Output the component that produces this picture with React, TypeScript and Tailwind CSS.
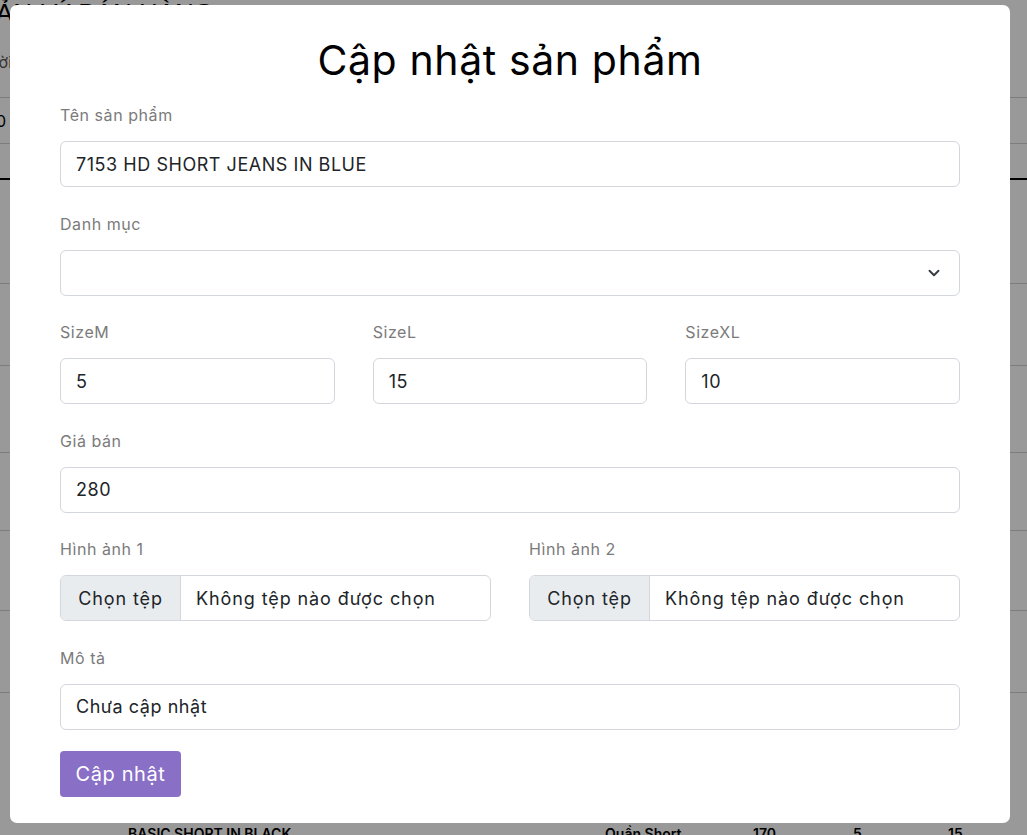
import React from 'react';
import { ChevronDown } from 'lucide-react';

const font = { fontFamily: 'Inter, "Noto Sans", sans-serif' };

const Label: React.FC<{ text: string }> = ({ text }) => (
  <div className="h-6 leading-6 text-[16px] tracking-[0.035em] text-[#7b7b7b] mb-[14px]">{text}</div>
);

const TextBox: React.FC<{ value: string }> = ({ value }) => (
  <div className="h-[46px] border border-[#d3d6db] rounded-[6px] px-[15px] flex items-center text-[18px] tracking-[0.03em] text-[#212529]">
    {value}
  </div>
);

const FileBox: React.FC = () => (
  <div className="h-[46px] border border-[#d3d6db] rounded-[6px] flex items-stretch text-[18px] tracking-[0.05em] text-[#212529] overflow-hidden">
    <div className="w-[120px] bg-[#e9ecef] border-r border-[#d3d6db] flex items-center justify-center">Chọn tệp</div>
    <div className="flex items-center pl-[15px]">Không tệp nào được chọn</div>
  </div>
);

const BackgroundPage: React.FC = () => (
  <div className="bg-white w-[1027px] h-[835px] overflow-hidden text-black" style={font}>
    <div
      className="h-[30px] -mt-[2px] w-[214px] flex justify-end text-[26px] leading-[30px] whitespace-nowrap"
      style={{ fontFamily: '"Liberation Sans", Arial, sans-serif' }}
    >
      QUẢN LÝ BÁN HÀNG
    </div>
    <div className="h-[69px] pt-[22px] w-[12px] flex justify-end text-[16px] text-[#555] whitespace-nowrap">Người</div>
    <div className="border-t border-[#d0d0d0] h-[46px] flex items-center text-[16px] -ml-[4px]">0</div>
    <div className="border-t border-[#d0d0d0] h-[35px]"></div>
    <div className="border-t-2 border-black h-[105px]"></div>
    <div className="border-t border-[#d0d0d0] h-[82px]"></div>
    <div className="border-t border-[#d0d0d0] h-[87px]"></div>
    <div className="border-t border-[#d0d0d0] h-[78px]"></div>
    <div className="border-t border-[#d0d0d0] h-[80px]"></div>
    <div className="border-t border-[#d0d0d0] h-[82px]"></div>
    <div className="border-t border-[#d0d0d0] h-[131px]"></div>
    <div className="flex text-[14px] font-semibold">
      <span className="ml-[128px] w-[477px]">BASIC SHORT IN BLACK</span>
      <span className="w-[148px]">Quần Short</span>
      <span className="w-[100px]">170</span>
      <span className="w-[95px]">5</span>
      <span>15</span>
    </div>
  </div>
);

export default function App() {
  return (
    <div className="relative w-[1027px] h-[835px] overflow-hidden">
      <BackgroundPage />
      <div className="fixed inset-0 bg-black/40">
        <div className="ml-[10px] mt-[5px] w-[1000px] bg-white rounded-[7px] px-[50px] pt-[31px] pb-[26px]" style={font}>
          <h2 className="text-[41px] leading-[48px] tracking-[0.015em] text-center text-black mb-[19px]">Cập nhật sản phẩm</h2>

          <div className="mb-[24.6px]">
            <Label text="Tên sản phẩm" />
            <TextBox value="7153 HD SHORT JEANS IN BLUE" />
          </div>

          <div className="mb-[24.6px]">
            <Label text="Danh mục" />
            <div className="h-[46px] border border-[#d3d6db] rounded-[6px] pl-[15px] pr-[16px] flex items-center justify-end">
              <ChevronDown size={18} strokeWidth={2.5} className="text-[#343a40]" />
            </div>
          </div>

          <div className="grid grid-cols-3 gap-x-[38px] mb-[24.6px]">
            <div>
              <Label text="SizeM" />
              <TextBox value="5" />
            </div>
            <div>
              <Label text="SizeL" />
              <TextBox value="15" />
            </div>
            <div>
              <Label text="SizeXL" />
              <TextBox value="10" />
            </div>
          </div>

          <div className="mb-[24.6px]">
            <Label text="Giá bán" />
            <TextBox value="280" />
          </div>

          <div className="grid grid-cols-2 gap-x-[38px] mb-[24.6px]">
            <div>
              <Label text="Hình ảnh 1" />
              <FileBox />
            </div>
            <div>
              <Label text="Hình ảnh 2" />
              <FileBox />
            </div>
          </div>

          <div className="mb-[21px]">
            <Label text="Mô tả" />
            <TextBox value="Chưa cập nhật" />
          </div>

          <button className="h-[46px] w-[121px] rounded-[4px] bg-[#8a6fc7] text-white text-[20px] tracking-[0.03em]">
            Cập nhật
          </button>
        </div>
      </div>
    </div>
  );
}
